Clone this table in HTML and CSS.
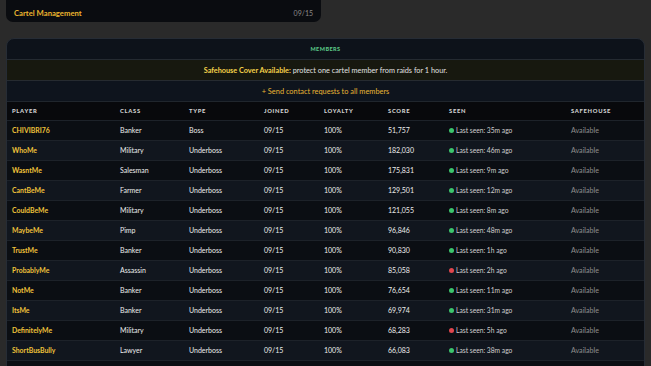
FILE: index.html
```html
<!DOCTYPE html>
<html>
<head>
<meta charset="utf-8">
<link rel="stylesheet" href="styles.css">
</head>
<body>
<div class="topcard">
  <span class="topcard-title">Cartel Management</span>
  <span class="topcard-date">09/15</span>
</div>
<section class="panel">
  <div class="panel-head">MEMBERS</div>
  <div class="banner"><b>Safehouse Cover Available:</b> protect one cartel member from raids for 1 hour.</div>
  <div class="contact">+ Send contact requests to all members</div>
  <table class="members">
    <colgroup>
      <col class="c-player"><col class="c-class"><col class="c-type"><col class="c-joined"><col class="c-loyal"><col class="c-score"><col class="c-seen"><col class="c-safe">
    </colgroup>
    <thead>
      <tr><th>Player</th><th>Class</th><th>Type</th><th>Joined</th><th>Loyalty</th><th>Score</th><th>Seen</th><th>Safehouse</th></tr>
    </thead>
    <tbody>
      <tr><td class="name">CHIVIBRI76</td><td>Banker</td><td>Boss</td><td>09/15</td><td>100%</td><td>51,757</td><td class="seen"><span class="dot on"></span>Last seen: 35m ago</td><td class="safe">Available</td></tr>
      <tr><td class="name">WhoMe</td><td>Military</td><td>Underboss</td><td>09/15</td><td>100%</td><td>182,030</td><td class="seen"><span class="dot on"></span>Last seen: 46m ago</td><td class="safe">Available</td></tr>
      <tr><td class="name">WasntMe</td><td>Salesman</td><td>Underboss</td><td>09/15</td><td>100%</td><td>175,831</td><td class="seen"><span class="dot on"></span>Last seen: 9m ago</td><td class="safe">Available</td></tr>
      <tr><td class="name">CantBeMe</td><td>Farmer</td><td>Underboss</td><td>09/15</td><td>100%</td><td>129,501</td><td class="seen"><span class="dot on"></span>Last seen: 12m ago</td><td class="safe">Available</td></tr>
      <tr><td class="name">CouldBeMe</td><td>Military</td><td>Underboss</td><td>09/15</td><td>100%</td><td>121,055</td><td class="seen"><span class="dot on"></span>Last seen: 8m ago</td><td class="safe">Available</td></tr>
      <tr><td class="name">MaybeMe</td><td>Pimp</td><td>Underboss</td><td>09/15</td><td>100%</td><td>96,846</td><td class="seen"><span class="dot on"></span>Last seen: 48m ago</td><td class="safe">Available</td></tr>
      <tr><td class="name">TrustMe</td><td>Banker</td><td>Underboss</td><td>09/15</td><td>100%</td><td>90,830</td><td class="seen"><span class="dot on"></span>Last seen: 1h ago</td><td class="safe">Available</td></tr>
      <tr><td class="name">ProbablyMe</td><td>Assassin</td><td>Underboss</td><td>09/15</td><td>100%</td><td>85,058</td><td class="seen"><span class="dot off"></span>Last seen: 2h ago</td><td class="safe">Available</td></tr>
      <tr><td class="name">NotMe</td><td>Banker</td><td>Underboss</td><td>09/15</td><td>100%</td><td>76,654</td><td class="seen"><span class="dot on"></span>Last seen: 11m ago</td><td class="safe">Available</td></tr>
      <tr><td class="name">ItsMe</td><td>Banker</td><td>Underboss</td><td>09/15</td><td>100%</td><td>69,974</td><td class="seen"><span class="dot on"></span>Last seen: 31m ago</td><td class="safe">Available</td></tr>
      <tr><td class="name">DefinitelyMe</td><td>Military</td><td>Underboss</td><td>09/15</td><td>100%</td><td>68,283</td><td class="seen"><span class="dot off"></span>Last seen: 5h ago</td><td class="safe">Available</td></tr>
      <tr><td class="name">ShortBusBully</td><td>Lawyer</td><td>Underboss</td><td>09/15</td><td>100%</td><td>66,083</td><td class="seen"><span class="dot on"></span>Last seen: 38m ago</td><td class="safe">Available</td></tr>
      <tr><td class="name">SHADOWKING</td><td>Assassin</td><td>Underboss</td><td>09/15</td><td>100%</td><td>48,818</td><td class="seen"><span class="dot on"></span>Last seen: 22m ago</td><td class="safe">Available</td></tr>
    </tbody>
  </table>
</section>
</body>
</html>
```

FILE: styles.css
```css
html, body {
  margin: 0;
  padding: 0;
}
body {
  background: #2a2a2a;
  font-family: Lato, "Open Sans", sans-serif;
  color: #e4e4e4;
  overflow: hidden;
  height: 366px;
}
.topcard {
  margin-left: 6px;
  width: 315px;
  height: 22px;
  box-sizing: border-box;
  background: #0a0c10;
  border-radius: 0 0 7px 7px;
  display: flex;
  align-items: center;
  justify-content: space-between;
  padding: 4px 8px 0 8px;
}
.topcard-title {
  color: #eab52f;
  font-size: 7.7px;
  font-weight: 700;
}
.topcard-date {
  color: #8a8a8a;
  font-size: 7px;
}
.panel {
  margin: 16px 6px 0 6px;
  background: #0d121a;
  border: 1px solid #262c35;
  border-radius: 8px;
  overflow: hidden;
}
.panel-head {
  height: 20px;
  display: flex;
  align-items: center;
  justify-content: center;
  color: #59c485;
  font-size: 5.5px;
  font-weight: 900;
  letter-spacing: 0.45px;
  border-bottom: 1px solid #242a31;
}
.banner {
  height: 20px;
  display: flex;
  align-items: center;
  justify-content: center;
  background: #17180f;
  color: #e0e0e0;
  font-size: 7.3px;
  border-bottom: 1px solid #262b30;
  white-space: pre;
}
.banner b {
  color: #f5d24a;
  font-weight: 700;
}
.contact {
  height: 20px;
  display: flex;
  align-items: center;
  justify-content: center;
  background: #0e141d;
  color: #e8b534;
  font-size: 7.4px;
  border-bottom: 1px solid #20262d;
}
.members {
  width: 100%;
  border-collapse: collapse;
  table-layout: fixed;
}
.c-player { width: 108px; }
.c-class { width: 69px; }
.c-type { width: 75px; }
.c-joined { width: 60px; }
.c-loyal { width: 64px; }
.c-score { width: 61px; }
.c-seen { width: 122px; }
.c-safe { width: auto; }
.members thead tr {
  height: 18px;
}
.members th {
  padding: 0 0 0 5px;
  line-height: 8px;
  text-align: left;
  background: #08090c;
  color: #d2d2d2;
  font-size: 5.8px;
  font-weight: 900;
  letter-spacing: 0.7px;
  text-transform: uppercase;
}
.members tbody tr {
  height: 20px;
}
.members td {
  padding: 0 0 0 5px;
  line-height: 9px;
  border-top: 1px solid #1d2229;
  font-size: 7px;
  color: #ececec;
  white-space: nowrap;
}
.members tbody tr:nth-child(odd) td {
  background: #0b0e13;
}
.members tbody tr:nth-child(even) td {
  background: #11161e;
}
.members td.name {
  color: #f0c23a;
  font-weight: 700;
  font-size: 6.9px;
}
.members td.seen {
  color: #cfcfcf;
  font-size: 6.7px;
}
.members td.safe {
  color: #8d8d8d;
  font-size: 7.1px;
}
.dot {
  display: inline-block;
  width: 5px;
  height: 5px;
  border-radius: 50%;
  margin-right: 2px;
  vertical-align: -0.5px;
}
.dot.on { background: #3cc46c; }
.dot.off { background: #e0464e; }
```
